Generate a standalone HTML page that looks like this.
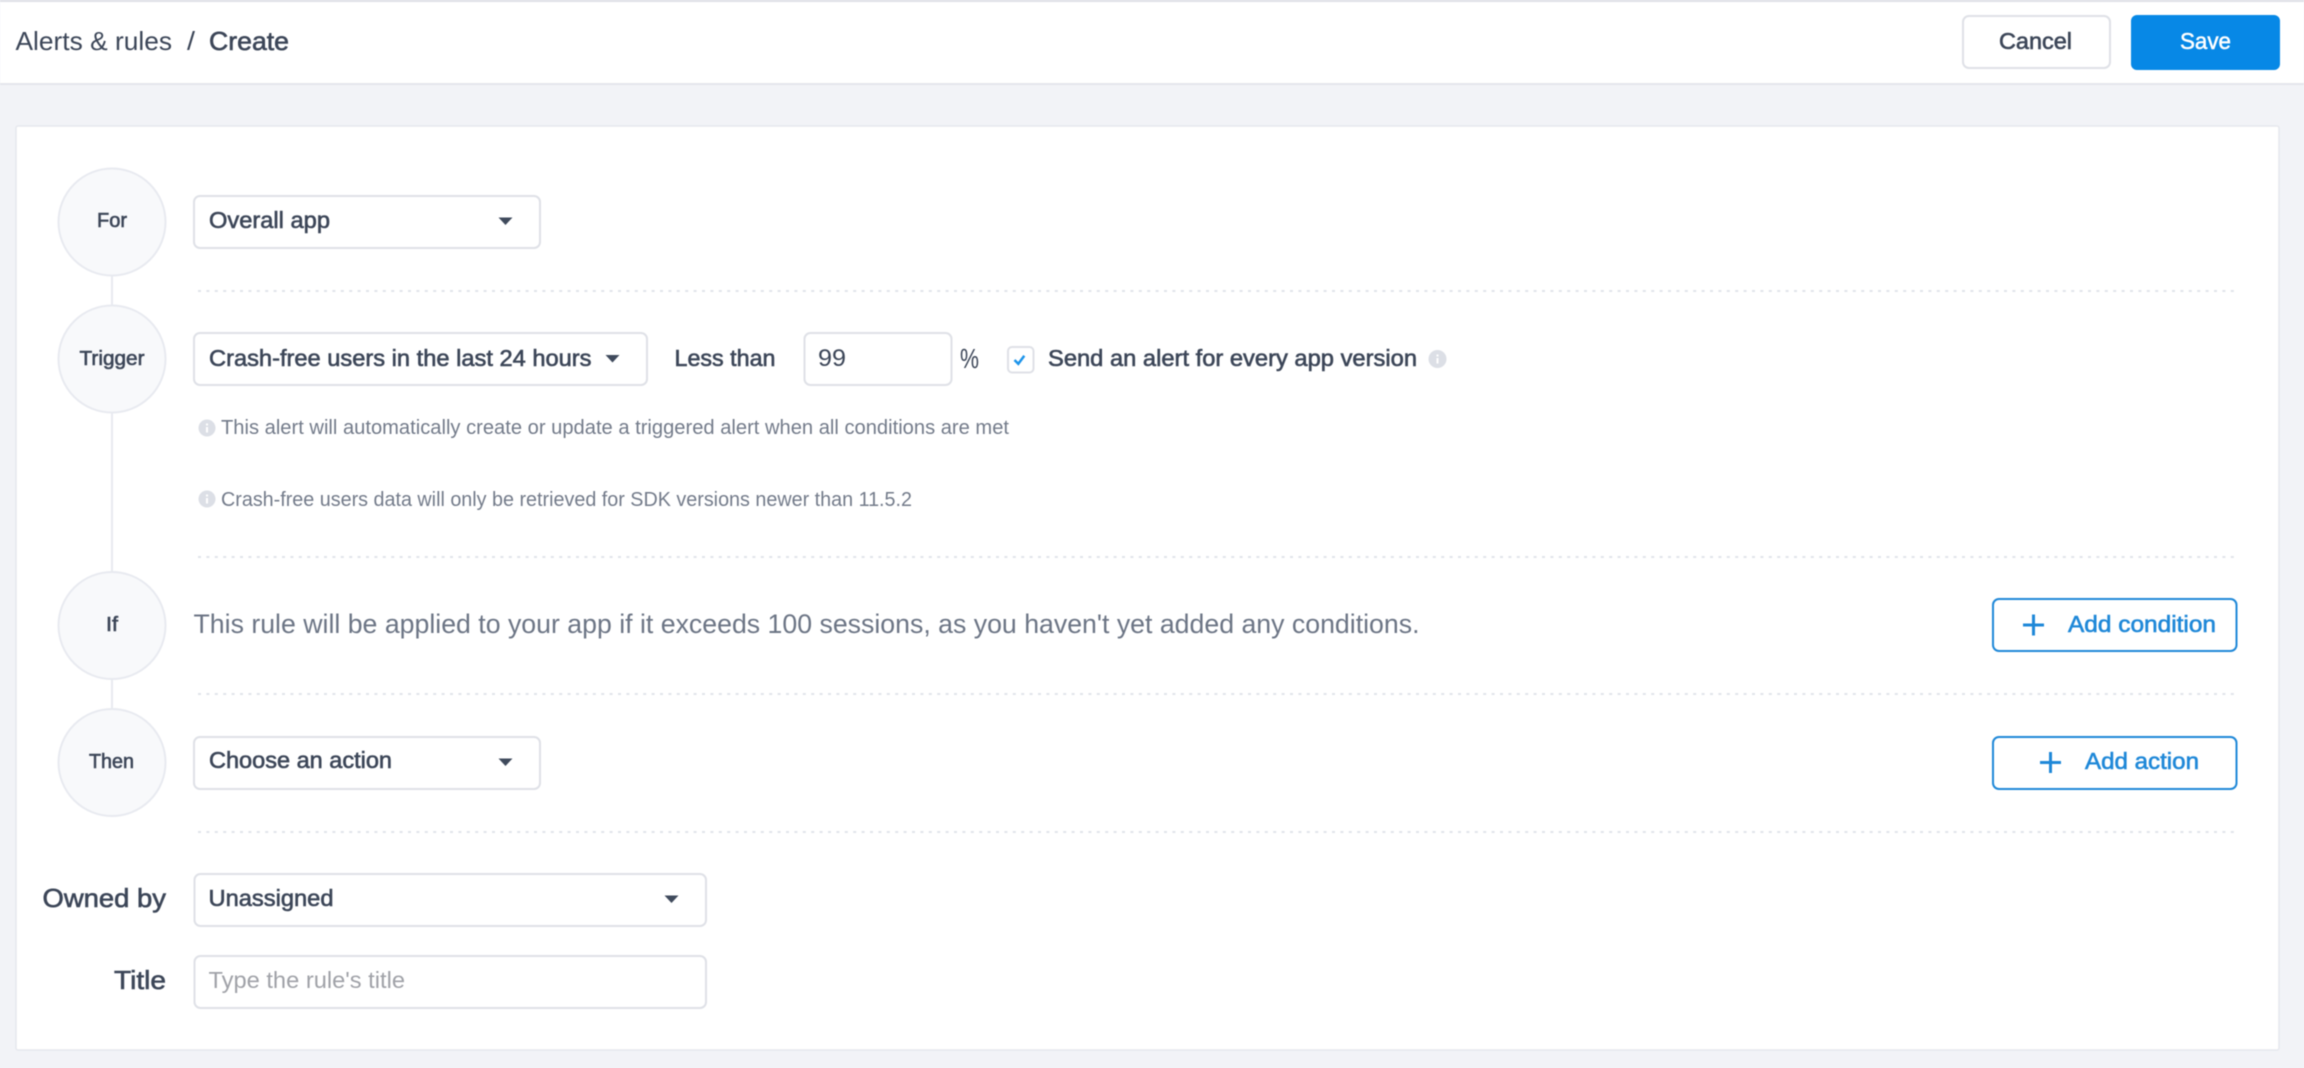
<!DOCTYPE html>
<html lang="en">
<head>
<meta charset="utf-8">
<title>Alerts &amp; rules / Create</title>
<style>
html,body{margin:0;padding:0;width:2304px;height:1068px;overflow:hidden;background:#f2f3f7}
svg{display:block;position:absolute;left:0;top:0;filter:blur(.4px)}
text{font-family:"Liberation Sans",Arial,sans-serif;fill:#3c4658;white-space:pre}
.m{stroke:#3c4658;stroke-width:.6px}
.h{fill:#737b8a}
.b{fill:#1f88d8;stroke:#1f88d8;stroke-width:.6px}
.box{fill:#fff;stroke:#dfe1e7;stroke-width:2}
.dash{stroke:#e1e4ea;stroke-width:2;stroke-dasharray:3 5.400;fill:none}
.circ{fill:#f8f9fb;stroke:#e8eaf0;stroke-width:2}
.conn{stroke:#e8eaf0;stroke-width:2}
.caret{fill:#3f4a5c}
.addbtn{fill:#fff;stroke:#1f88d8;stroke-width:2}
.plus{stroke:#1f88d8;stroke-width:3;fill:none}
</style>
</head>
<body>
<svg width="2304" height="1068" viewBox="0 0 2304 1068" xmlns="http://www.w3.org/2000/svg">
<rect width="2304" height="1068" fill="#f2f3f7"/>
<!-- header -->
<rect x="0" y="0" width="2304" height="84" fill="#fff"/>
<rect x="0" y="0" width="2304" height="2" fill="#dfe1e7"/>
<rect x="0" y="83" width="2304" height="2" fill="#e4e6eb"/>
<text x="15.500" y="50" font-size="26" textLength="156.500" lengthAdjust="spacingAndGlyphs">Alerts &amp; rules</text>
<text x="187" y="50" font-size="26" textLength="8" lengthAdjust="spacingAndGlyphs">/</text>
<text class="m" x="209" y="50" font-size="26" textLength="80" lengthAdjust="spacingAndGlyphs">Create</text>
<rect class="box" x="1963" y="16" width="147" height="52" rx="6"/>
<text class="m" x="1999" y="49" font-size="23" textLength="73" lengthAdjust="spacingAndGlyphs">Cancel</text>
<rect x="2131" y="15" width="149" height="55" rx="6" fill="#0788e6"/>
<text x="2180" y="49" font-size="23" textLength="51" lengthAdjust="spacingAndGlyphs" style="fill:#fff;stroke:#fff;stroke-width:.5px">Save</text>
<!-- card -->
<rect x="16" y="126" width="2263" height="924" rx="2" fill="#fff" stroke="#e6e8ee" stroke-width="1.500"/>
<!-- connectors -->
<line class="conn" x1="112" y1="276" x2="112" y2="306"/>
<line class="conn" x1="112" y1="412" x2="112" y2="573"/>
<line class="conn" x1="112" y1="679" x2="112" y2="710"/>
<!-- circles -->
<circle class="circ" cx="112" cy="222" r="53.500"/>
<circle class="circ" cx="112" cy="359" r="53.500"/>
<circle class="circ" cx="112" cy="625.500" r="53.500"/>
<circle class="circ" cx="112" cy="762.500" r="53.500"/>
<text class="m" x="97" y="227" font-size="20" textLength="30" lengthAdjust="spacingAndGlyphs">For</text>
<text class="m" x="79.500" y="365" font-size="20" textLength="65" lengthAdjust="spacingAndGlyphs">Trigger</text>
<text class="m" x="106" y="631" font-size="20" textLength="12" lengthAdjust="spacingAndGlyphs">If</text>
<text class="m" x="89" y="768" font-size="20" textLength="45" lengthAdjust="spacingAndGlyphs">Then</text>
<!-- dashes -->
<line class="dash" x1="198" y1="291" x2="2237" y2="291"/>
<line class="dash" x1="198" y1="557" x2="2237" y2="557"/>
<line class="dash" x1="198" y1="694" x2="2237" y2="694"/>
<line class="dash" x1="198" y1="832" x2="2237" y2="832"/>
<!-- For -->
<rect class="box" x="194" y="196" width="346" height="52" rx="6"/>
<text class="m" x="209" y="228" font-size="23" textLength="121" lengthAdjust="spacingAndGlyphs">Overall app</text>
<path class="caret" d="M498.500 217.500h14l-7 7.500z"/>
<!-- Trigger -->
<rect class="box" x="194" y="333" width="453" height="52" rx="6"/>
<text class="m" x="209" y="366" font-size="23" textLength="382.500" lengthAdjust="spacingAndGlyphs">Crash-free users in the last 24 hours</text>
<path class="caret" d="M605.500 355h14l-7 7.500z"/>
<text class="m" x="674.500" y="366" font-size="23" textLength="101" lengthAdjust="spacingAndGlyphs">Less than</text>
<rect class="box" x="804.500" y="333" width="147" height="52" rx="6"/>
<text x="818" y="366" font-size="24" textLength="28" lengthAdjust="spacingAndGlyphs">99</text>
<text x="960" y="368" font-size="28" textLength="19" lengthAdjust="spacingAndGlyphs">%</text>
<rect class="box" x="1008" y="347" width="25.500" height="25.500" rx="4"/>
<path d="M1014.500 360l3.800 3.800 6-8" fill="none" stroke="#1d94ea" stroke-width="2.500"/>
<text class="m" x="1048" y="366" font-size="23" textLength="369" lengthAdjust="spacingAndGlyphs">Send an alert for every app version</text>
<circle cx="1437.500" cy="359" r="9" fill="#dcdfe6"/>
<path d="M1436.500 354.500h2v2h-2zM1436.500 358h2v5.500h-2z" fill="#fff"/>
<!-- hints -->
<circle cx="207" cy="428" r="8.500" fill="#dcdfe6"/>
<path d="M206 423.500h2v2h-2zM206 427h2v5.500h-2z" fill="#fff"/>
<text class="h" x="221" y="434" font-size="20" textLength="788" lengthAdjust="spacingAndGlyphs">This alert will automatically create or update a triggered alert when all conditions are met</text>
<circle cx="207" cy="499" r="8.500" fill="#dcdfe6"/>
<path d="M206 494.500h2v2h-2zM206 498h2v5.500h-2z" fill="#fff"/>
<text class="h" x="221" y="506" font-size="20" textLength="691" lengthAdjust="spacingAndGlyphs">Crash-free users data will only be retrieved for SDK versions newer than 11.5.2</text>
<!-- If -->
<text class="h" x="193.500" y="633" font-size="27" textLength="1226" lengthAdjust="spacingAndGlyphs" style="fill:#6c7585">This rule will be applied to your app if it exceeds 100 sessions, as you haven't yet added any conditions.</text>
<rect class="addbtn" x="1993" y="599" width="243.500" height="52" rx="6"/>
<path class="plus" d="M2023 625h21M2033.500 614.500v21"/>
<text class="b" x="2068" y="632" font-size="23" textLength="148" lengthAdjust="spacingAndGlyphs">Add condition</text>
<!-- Then -->
<rect class="box" x="194" y="737" width="346" height="52" rx="6"/>
<text class="m" x="209" y="768" font-size="23" textLength="183" lengthAdjust="spacingAndGlyphs">Choose an action</text>
<path class="caret" d="M498.500 758.500h14l-7 7.500z"/>
<rect class="addbtn" x="1993" y="737" width="243.500" height="52" rx="6"/>
<path class="plus" d="M2040 762.500h21M2050.500 752v21"/>
<text class="b" x="2085" y="769" font-size="23" textLength="114" lengthAdjust="spacingAndGlyphs">Add action</text>
<!-- Owned by / Title -->
<text class="m" x="42.500" y="907" font-size="26" textLength="123.500" lengthAdjust="spacingAndGlyphs">Owned by</text>
<rect class="box" x="194.500" y="874" width="511.500" height="52" rx="6"/>
<text class="m" x="208.500" y="906" font-size="23" textLength="125" lengthAdjust="spacingAndGlyphs">Unassigned</text>
<path class="caret" d="M664.500 895.500h14l-7 7.500z"/>
<text class="m" x="114" y="989" font-size="26" textLength="52" lengthAdjust="spacingAndGlyphs">Title</text>
<rect class="box" x="194.500" y="956" width="511.500" height="52" rx="6"/>
<text x="208.500" y="988" font-size="23" textLength="196.500" lengthAdjust="spacingAndGlyphs" style="fill:#a0a2a8">Type the rule's title</text>
</svg>
</body>
</html>
